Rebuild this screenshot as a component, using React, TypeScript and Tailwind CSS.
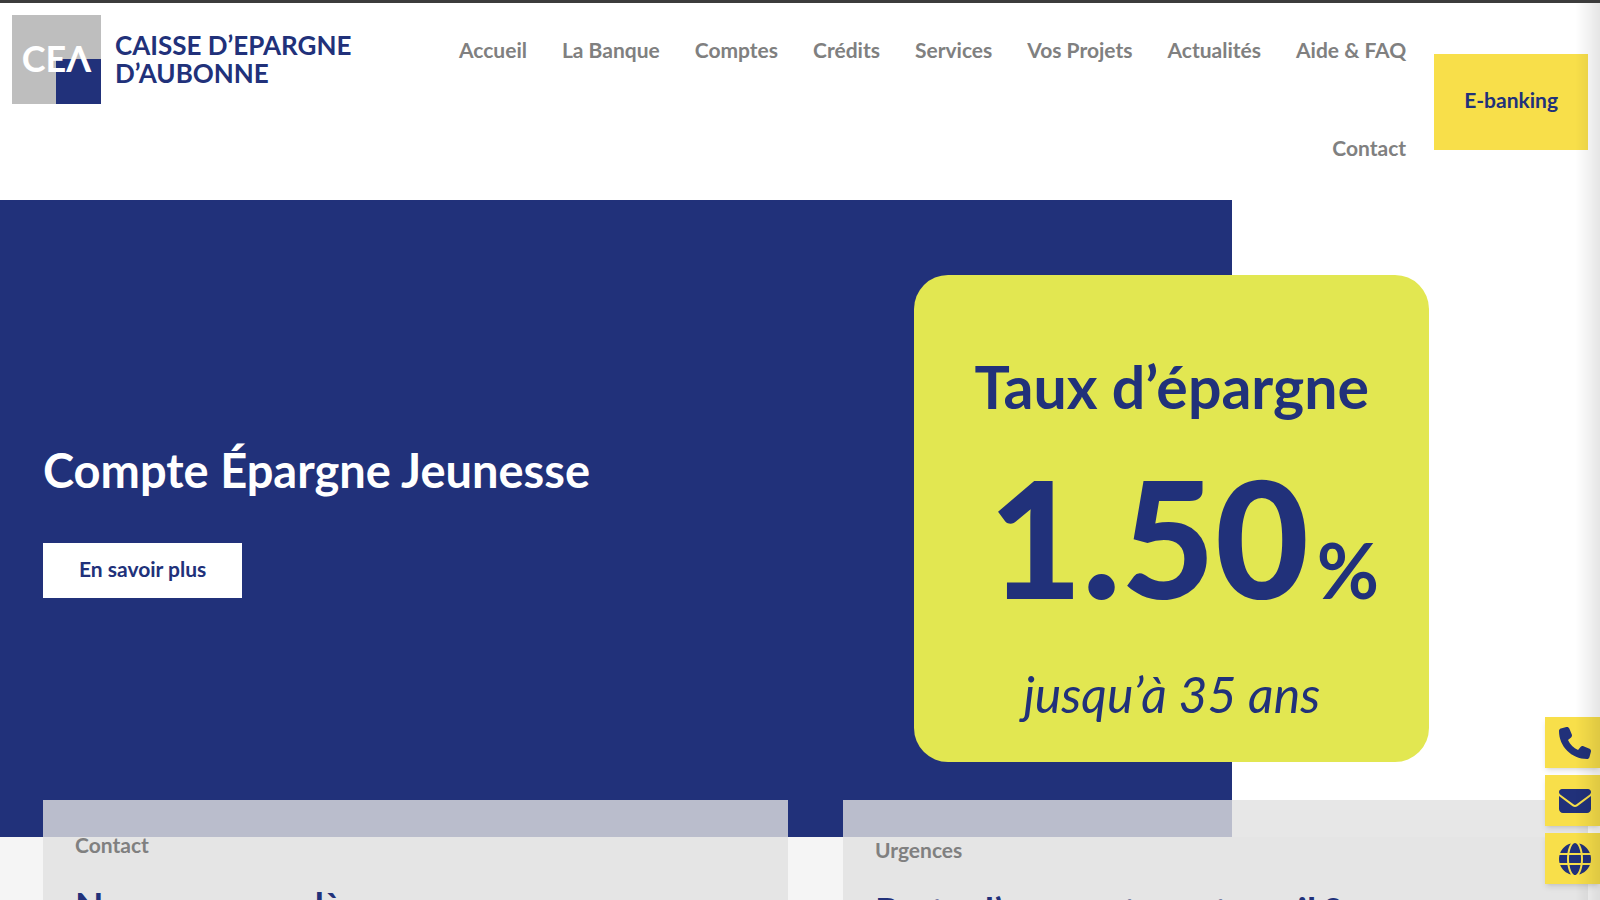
import React from 'react';
import { FaPhone, FaEnvelope, FaGlobe } from 'react-icons/fa6';

const navLinks = [
  'Accueil',
  'La Banque',
  'Comptes',
  'Crédits',
  'Services',
  'Vos Projets',
  'Actualités',
  'Aide & FAQ',
  'Contact',
];

const sideLinks = [
  { label: 'Téléphone', icon: FaPhone },
  { label: 'E-mail', icon: FaEnvelope },
  { label: 'Site web', icon: FaGlobe },
];

function Logo() {
  return (
    <a href="#" className="flex shrink-0 items-start gap-[14px] pt-3">
      <div className="relative flex h-[89px] w-[89px] items-center justify-center bg-[#bebebe] pb-1">
        <div className="absolute bottom-0 right-0 h-[45px] w-[45px] bg-[#21317a]"></div>
        <span className="relative text-[36px] leading-none font-bold text-white">CEΛ</span>
      </div>
      <span className="flex flex-col pt-4 text-[26px] leading-7 font-bold text-[#21317a]">
        <span>CAISSE D’EPARGNE</span>
        <span>D’AUBONNE</span>
      </span>
    </a>
  );
}

function Header() {
  return (
    <header className="flex border-t-[3px] border-[#3c3c3c] bg-white pr-3 pl-3">
      <Logo />
      <nav className="flex flex-1 flex-wrap justify-end gap-x-[35px] gap-y-1 pr-7 pb-[5px] pl-16">
        {navLinks.map((link) => (
          <a key={link} href="#" className="text-[21px] leading-[94px] font-bold text-[#808080]">
            {link}
          </a>
        ))}
      </nav>
      <a
        href="#"
        className="flex h-24 shrink-0 items-center self-center bg-[#f8df4a] px-[30px] pb-1 text-[21px] font-bold text-[#21317a]"
      >
        E-banking
      </a>
    </header>
  );
}

function RateCard() {
  return (
    <div className="flex h-[487px] w-[515px] flex-col items-center rounded-[34px] bg-[#e2e751] pt-[76px] text-[#21317a]">
      <p className="text-[59px] leading-[72px] font-bold">Taux d’épargne</p>
      <p className="mt-[26px] pl-6 text-[162px] leading-[176px] font-black">
        1.50<span className="ml-2 text-[76px] font-bold">%</span>
      </p>
      <p className="text-[50px] leading-[72px] italic">jusqu’à 35 ans</p>
    </div>
  );
}

function Hero() {
  return (
    <section className="flex h-[637px] bg-[linear-gradient(to_right,#21317a_77%,#ffffff_77%)]">
      <div className="w-4/7 pt-[238px] pl-[43px]">
        <h1 className="text-[47px] leading-[64px] font-bold text-white">Compte Épargne Jeunesse</h1>
        <button className="mt-[41px] h-[55px] bg-white px-9 pb-1 text-[21px] font-bold text-[#21317a]">
          En savoir plus
        </button>
      </div>
      <div className="pt-[75px]">
        <RateCard />
      </div>
    </section>
  );
}

export default function App() {
  return (
    <div className="h-screen overflow-hidden bg-[#f5f5f5] font-['Lato',sans-serif]">
      <Header />
      <Hero />

      {/* Cards overlapping the hero */}
      <div className="relative -mt-[37px] flex gap-[55px] pr-3 pl-[43px]">
        <section className="h-80 flex-1 bg-[#e1e1e1]/80 px-8 pt-[31px]">
          <p className="text-[21px] leading-7 font-bold text-[#808080]">Contact</p>
          <h2 className="mt-[22px] text-[37px] leading-[48px] font-bold text-[#21317a]">Nous sommes là</h2>
        </section>
        <section className="h-80 flex-1 bg-[#e1e1e1]/80 px-8 pt-9">
          <p className="text-[21px] leading-7 font-bold text-[#808080]">Urgences</p>
          <h2 className="mt-[22px] text-[37px] leading-[48px] font-bold text-[#21317a]">
            Perte d’une carte au travail ?
          </h2>
        </section>
      </div>

      {/* Floating shortcuts */}
      <div className="fixed right-0 bottom-4 flex flex-col gap-[7px]">
        {sideLinks.map(({ label, icon: Icon }) => (
          <a
            key={label}
            href="#"
            aria-label={label}
            className="flex h-[51px] w-[55px] items-center justify-center bg-[#f8df4a] pl-1 text-[#21317a] shadow-md"
          >
            <Icon className="h-8 w-8" />
          </a>
        ))}
      </div>
      <div className="pointer-events-none fixed top-[3px] right-0 bottom-0 w-6 bg-linear-to-r from-transparent to-black/10"></div>
    </div>
  );
}
